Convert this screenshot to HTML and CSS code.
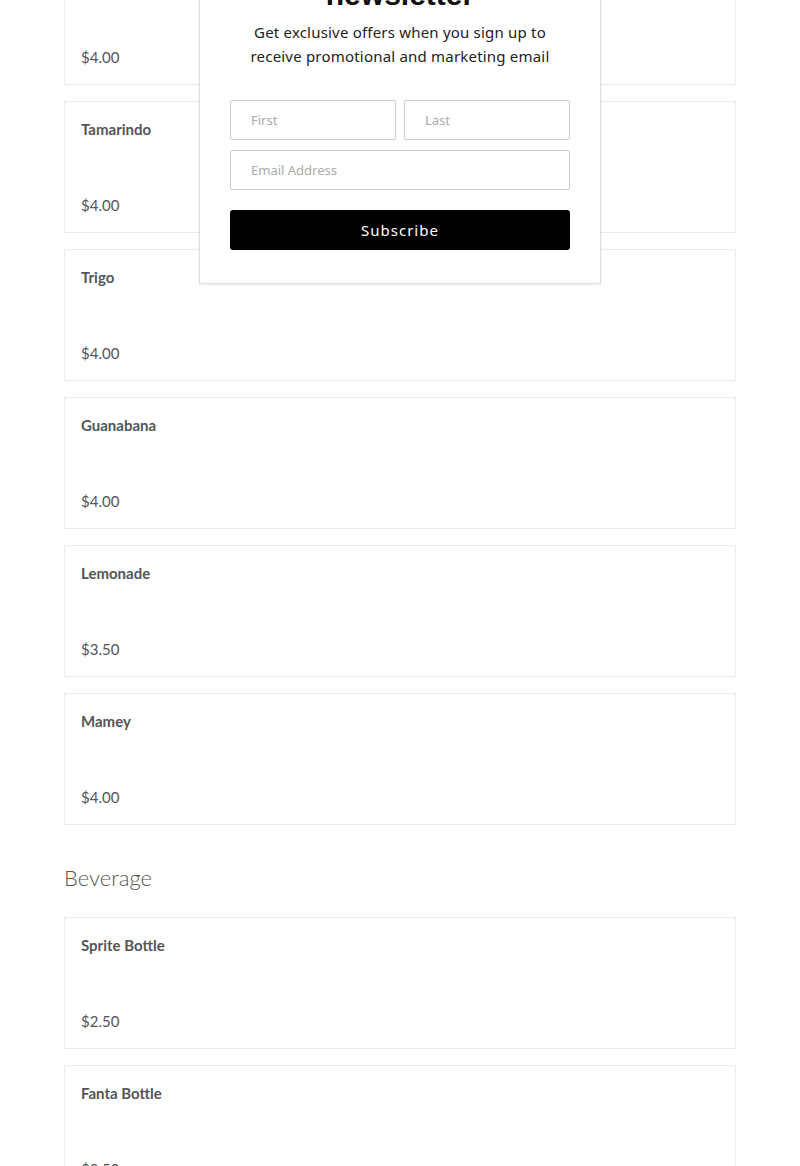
FILE: index.html
```html
<!DOCTYPE html>
<html>
<head>
<meta charset="utf-8">
<link rel="stylesheet" href="styles.css">
</head>
<body>
<main class="menu">
  <section class="group">
    <div class="card card-first"><div class="title">Horchata</div><div class="price">$4.00</div></div>
    <div class="card"><div class="title">Tamarindo</div><div class="price">$4.00</div></div>
    <div class="card"><div class="title">Trigo</div><div class="price">$4.00</div></div>
    <div class="card"><div class="title">Guanabana</div><div class="price">$4.00</div></div>
    <div class="card"><div class="title">Lemonade</div><div class="price">$3.50</div></div>
    <div class="card"><div class="title">Mamey</div><div class="price">$4.00</div></div>
  </section>
  <h2 class="group-title">Beverage</h2>
  <section class="group">
    <div class="card"><div class="title">Sprite Bottle</div><div class="price">$2.50</div></div>
    <div class="card"><div class="title">Fanta Bottle</div><div class="price">$2.50</div></div>
  </section>
</main>
<div class="popup">
  <h1 class="popup-title">newsletter</h1>
  <p class="popup-text">Get exclusive offers when you sign up to receive promotional and marketing email</p>
  <form class="form">
    <div class="row">
      <input class="field" type="text" placeholder="First">
      <input class="field" type="text" placeholder="Last">
    </div>
    <input class="field" type="email" placeholder="Email Address">
    <button class="btn" type="button">Subscribe</button>
  </form>
</div>
</body>
</html>
```
FILE: styles.css
```css
html, body {
  margin: 0;
  padding: 0;
  background: #fff;
  overflow: hidden;
}
body {
  font-family: Lato, "Liberation Sans", sans-serif;
  color: #555;
  height: 1166px;
  position: relative;
}
.menu {
  width: 672px;
  margin: 0 auto;
}
.group {
  display: flex;
  flex-direction: column;
  gap: 16px;
}
.card {
  box-sizing: border-box;
  height: 132px;
  border: 1px solid #ebebeb;
  padding: 16px;
  display: flex;
  flex-direction: column;
  justify-content: space-between;
}
.card-first {
  margin-top: -47px;
}
.title {
  font-size: 15px;
  font-weight: 700;
  line-height: 22px;
  color: #555;
}
.price {
  font-size: 15px;
  line-height: 22px;
  color: #555;
}
.group-title {
  font-weight: 300;
  font-size: 22px;
  line-height: 30px;
  margin: 38px 0 24px;
  color: #555;
}
.popup {
  position: absolute;
  left: 199px;
  top: -50px;
  width: 402px;
  box-sizing: border-box;
  background: #fff;
  border: 1px solid #dedede;
  box-shadow: 0 1px 3px rgba(0,0,0,0.08);
  padding: 0 30px 33px;
  text-align: center;
  font-family: "Noto Sans", sans-serif;
}
.popup-title {
  margin: 0 0 5px;
  font-family: "Liberation Sans", Arial, sans-serif;
  font-size: 30px;
  line-height: 40px;
  padding-top: 24px;
  font-weight: 700;
  color: #111;
}
.popup-text {
  margin: 0;
  font-size: 15px;
  line-height: 24px;
  color: #222;
  letter-spacing: 0.2px;
}
.form {
  margin-top: 32px;
  display: flex;
  flex-direction: column;
  gap: 10px;
}
.row {
  display: flex;
  gap: 8px;
}
.field {
  box-sizing: border-box;
  height: 40px;
  width: 100%;
  min-width: 0;
  border: 1px solid #ccc;
  border-radius: 2px;
  padding: 0 20px;
  font-family: "Noto Sans", sans-serif;
  font-size: 13px;
  color: #333;
  outline: none;
}
.field::placeholder {
  color: #aaa;
}
.btn {
  margin-top: 10px;
  height: 40px;
  border: 0;
  border-radius: 3px;
  background: #000;
  color: #fff;
  font-family: "Noto Sans", sans-serif;
  font-size: 15px;
  letter-spacing: 1px;
}
```
